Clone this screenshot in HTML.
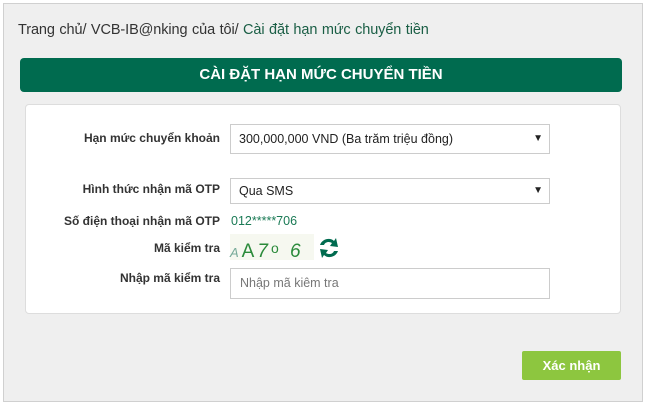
<!DOCTYPE html>
<html><head><meta charset="utf-8"><style>
body{margin:0;width:647px;height:405px;background:#fff;font-family:"Liberation Sans",Arial,sans-serif;position:relative;overflow:hidden}
.frame{position:absolute;left:3px;top:3px;width:638px;height:397px;background:#efefef;border:1px solid #d0d0d0}
.a{position:absolute}
.bc{left:18px;top:22px;font-size:14.5px;color:#333;letter-spacing:-0.1px;word-spacing:0.6px}
.bc span{color:#1a5e45}
.hdr{left:20px;top:58px;width:602px;height:34px;background:#006b4f;border-radius:4px;color:#fff;font-weight:bold;font-size:15px;text-align:center;line-height:34px}
.card{left:25px;top:104px;width:596px;height:210px;background:#fff;border:1px solid #ddd;border-radius:4px;box-sizing:border-box}
.lbl{width:220px;left:0;text-align:right;font-size:12px;font-weight:bold;color:#333}
.sel{left:230px;width:320px;background:#fff;border:1px solid #ccc;box-sizing:border-box;font-size:12.5px;color:#222;padding-left:8px}
.sel:after{content:"▼";position:absolute;right:6px;font-size:10px}
.btn{left:522px;top:351px;width:99px;height:29px;background:#8dc63f;color:#fff;font-weight:bold;font-size:13px;text-align:center;line-height:29px;border-radius:2px}
</style></head><body>
<div class="frame"></div>
<div class="a bc">Trang chủ/ VCB-IB@nking của tôi/ <span>Cài đặt hạn mức chuyển tiền</span></div>
<div class="a hdr">CÀI ĐẶT HẠN MỨC CHUYỂN TIỀN</div>
<div class="a card"></div>
<div class="a lbl" style="top:131px">Hạn mức chuyển khoản</div>
<div class="a sel" style="top:124px;height:30px;line-height:28px">300,000,000 VND (Ba trăm triệu đồng)</div>
<div class="a lbl" style="top:182px">Hình thức nhận mã OTP</div>
<div class="a sel" style="top:178px;height:26px;line-height:24px">Qua SMS</div>
<div class="a lbl" style="top:214px">Số điện thoại nhận mã OTP</div>
<div class="a" style="left:231px;top:214px;font-size:12.5px;color:#1a7a55">012*****706</div>
<div class="a lbl" style="top:241px">Mã kiểm tra</div>
<div class="a" style="left:230px;top:234px;width:84px;height:26px;background:#f6f8f0;font-family:'Liberation Sans',sans-serif;font-size:19px;color:#2a8a3a;line-height:28px;letter-spacing:3px"><span style="font-size:13px;font-style:italic;color:#7a9">A</span>A<i>7</i><span style="font-size:14px;vertical-align:4px">o</span> <i>6</i></div>
<svg class="a" style="left:318px;top:236px" width="22" height="24" viewBox="0 0 22 24"><path d="M2 9 C4 3 12 1 16 5 L18 2 L20 11 L12 10 L14 7 C11 5 7 6 6 9 Z" fill="#006b4f"/><path d="M20 15 C18 21 10 23 6 19 L4 22 L2 13 L10 14 L8 17 C11 19 15 18 16 15 Z" fill="#006b4f"/></svg>
<div class="a lbl" style="top:271px">Nhập mã kiểm tra</div>
<div class="a" style="left:230px;top:268px;width:320px;height:31px;border:1px solid #ccc;box-sizing:border-box;background:#fff;font-size:12.5px;color:#777;padding-left:9px;line-height:29px">Nhập mã kiêm tra</div>
<div class="a btn">Xác nhận</div>
</body></html>
